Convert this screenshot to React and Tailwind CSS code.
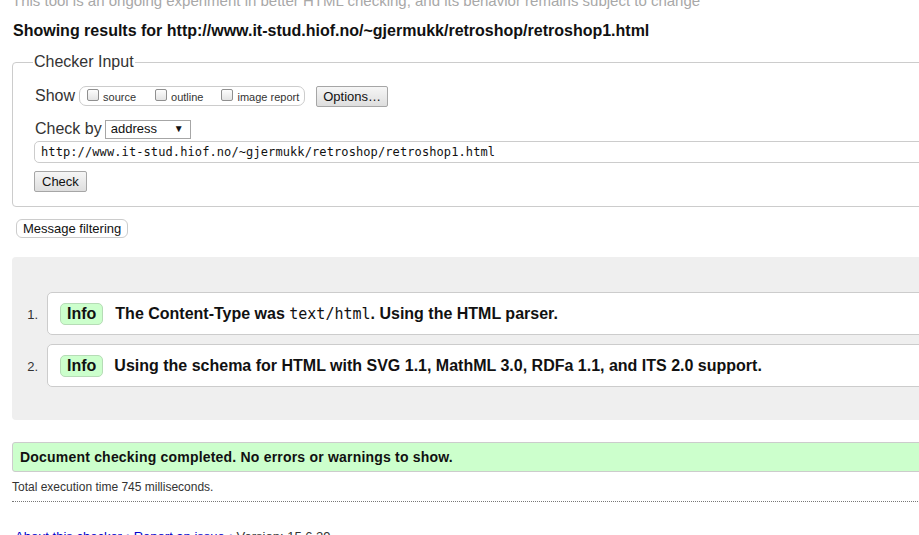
import React from "react";

const sans = { fontFamily: '"Liberation Sans", Arial, sans-serif' };

function Checkbox() {
  return (
    <span className="inline-block w-[12px] h-[12px] rounded-[2px] border border-[#8f8f8f] bg-gradient-to-b from-[#fdfdfd] to-[#e4e4e4] mr-[4px] relative top-[-2px]" />
  );
}

export default function App() {
  return (
    <div className="w-[919px] h-[535px] overflow-hidden bg-white text-black" style={sans}>
      <div className="w-[1000px] pl-[12px] mt-[-8px]">
        <p className="text-[15px] leading-[18px] text-[#a8a8a8] whitespace-nowrap">
          This tool is an ongoing experiment in better HTML checking, and its behavior remains subject to change
        </p>
        <h2 className="mt-[11px] ml-[1px] text-[16px] leading-[20px] font-bold text-[#111] whitespace-nowrap">
          Showing results for http://www.it-stud.hiof.no/~gjermukk/retroshop/retroshop1.html
        </h2>

        <fieldset className="mt-[12px] border border-[#ccc] rounded-[4px] pl-[22px] pr-[10px] pb-[13px] pt-[6px]">
          <legend className="px-[1px] ml-[-2px] text-[16px] leading-[18px] text-[#333]">Checker Input</legend>
          <div className="flex items-center h-[22px] mt-[8px]">
            <span className="text-[16px] text-[#333] mr-[4px]">Show</span>
            <span className="flex items-center h-[20px] border border-[#ccc] rounded-[7px] pl-[7px] pr-[5px] text-[11px] text-[#333]">
              <label className="flex items-center mr-[19px] relative top-[1px]"><Checkbox />source</label>
              <label className="flex items-center mr-[18px] relative top-[1px]"><Checkbox />outline</label>
              <label className="flex items-center relative top-[1px]"><Checkbox />image report</label>
            </span>
            <button className="ml-[11px] h-[21px] px-[6px] text-[13px] text-[#111] border border-[#a6a6a6] rounded-[2px] bg-gradient-to-b from-[#f6f6f6] to-[#dedede]">
              Options…
            </button>
          </div>
          <div className="flex items-center h-[20px] mt-[12px]">
            <span className="text-[16px] text-[#333] mr-[3px]">Check by</span>
            <span className="flex items-center justify-between w-[86px] h-[19px] border border-[#a6a6a6] bg-white pl-[5px] pr-[6px] text-[13px] text-[#111]">
              address
              <span className="text-[10px] leading-none">▼</span>
            </span>
          </div>
          <div className="mt-[2px] h-[22px] border border-[#ccc] rounded-l-[5px] bg-white flex items-center pl-[6px] ml-[-1px]">
            <span className="text-[12px] text-[#111] tracking-[0.1px]" style={{ fontFamily: '"DejaVu Sans Mono", "Liberation Mono", monospace' }}>
              http://www.it-stud.hiof.no/~gjermukk/retroshop/retroshop1.html
            </span>
          </div>
          <button className="mt-[8px] ml-[-1px] h-[21px] px-[7px] text-[13px] text-[#111] border border-[#a6a6a6] rounded-[2px] bg-gradient-to-b from-[#f6f6f6] to-[#dedede]">
            Check
          </button>
        </fieldset>

        <button className="mt-[12px] ml-[4px] h-[19px] px-[6px] text-[13px] text-[#111] border border-[#ccc] rounded-[6px] bg-white leading-[17px]">
          Message filtering
        </button>

        <div className="mt-[17px] bg-[#efefef] rounded-l-[4px] pt-[35px] pb-[33px]">
          <ol className="flex flex-col gap-[9px]">
            <li className="flex items-center">
              <span className="w-[35px] text-right pr-[9px] text-[13px] text-[#333] relative top-[1px]">1.</span>
              <div className="flex-1 h-[43px] bg-white border border-[#ccc] rounded-l-[5px] flex items-center pl-[12px]">
                <span className="h-[22px] px-[6px] flex items-center rounded-[5px] border border-[#b6dcb6] bg-[#ccffcc] text-[16px] font-bold text-[#111]">Info</span>
                <span className="ml-[12px] text-[16px] font-bold text-[#111] whitespace-nowrap">
                  The Content-Type was <code className="font-normal text-[15px]" style={{ fontFamily: '"DejaVu Sans Mono", "Liberation Mono", monospace' }}>text/html</code>. Using the HTML parser.
                </span>
              </div>
            </li>
            <li className="flex items-center">
              <span className="w-[35px] text-right pr-[9px] text-[13px] text-[#333] relative top-[1px]">2.</span>
              <div className="flex-1 h-[43px] bg-white border border-[#ccc] rounded-l-[5px] flex items-center pl-[12px]">
                <span className="h-[22px] px-[6px] flex items-center rounded-[5px] border border-[#b6dcb6] bg-[#ccffcc] text-[16px] font-bold text-[#111]">Info</span>
                <span className="ml-[11px] text-[16px] font-bold text-[#111] whitespace-nowrap">
                  Using the schema for HTML with SVG 1.1, MathML 3.0, RDFa 1.1, and ITS 2.0 support.
                </span>
              </div>
            </li>
          </ol>
        </div>

        <div className="mt-[22px] h-[30px] bg-[#ccffcc] border border-[#ccc] rounded-l-[3px] flex items-center pl-[7px]">
          <span className="text-[14px] font-bold text-[#111] tracking-[0.2px]">Document checking completed. No errors or warnings to show.</span>
        </div>
        <p className="mt-[8px] text-[12px] leading-[14px] text-[#333]">Total execution time 745 milliseconds.</p>
        <div className="mt-[7px] border-t border-dotted border-[#777]" />
        <p className="mt-[27px] ml-[3px] text-[13px] leading-[16px] text-[#00c] whitespace-nowrap">
          <a className="text-[#00c]">About this checker</a> • <a className="text-[#00c]">Report an issue</a> • <span className="text-[#333]">Version: 15.6.29</span>
        </p>
      </div>
    </div>
  );
}
